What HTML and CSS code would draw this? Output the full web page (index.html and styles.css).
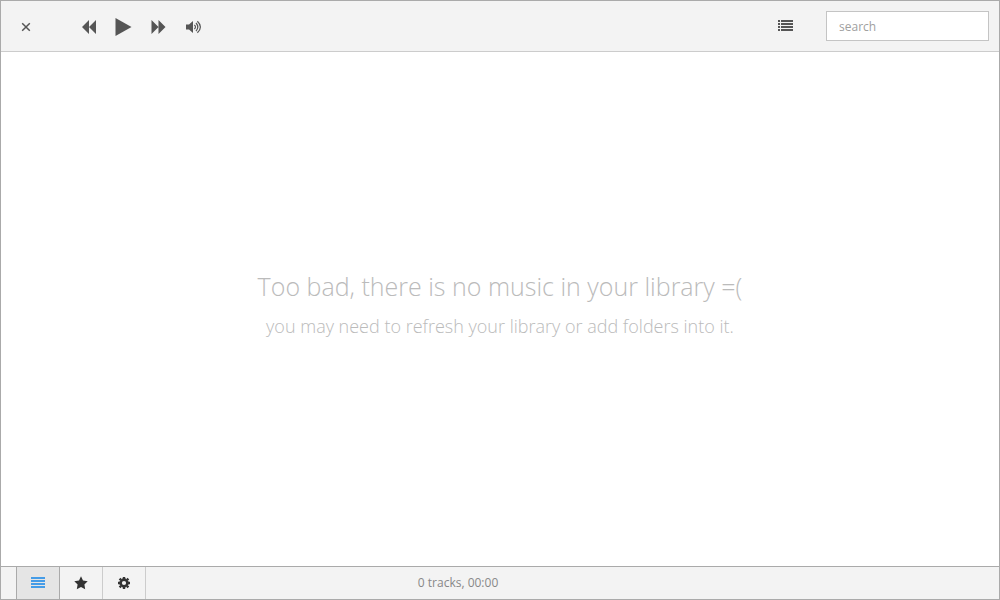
FILE: index.html
```html
<!DOCTYPE html>
<html lang="en">
<head>
    <meta charset="utf-8">
    <title>Music Library</title>
    <link rel="stylesheet" href="styles.css">
</head>
<body>
    <div class="app">
        <header class="header">
            <button type="button" class="icon-button close" aria-label="Close">
                <svg width="10" height="10" viewBox="0 0 10 10"><path d="M1.2 1.2L8.8 8.8M8.8 1.2L1.2 8.8" stroke="currentColor" stroke-width="1.5" fill="none"/></svg>
            </button>
            <div class="player-controls">
                <button type="button" class="icon-button" aria-label="Previous">
                    <svg width="14" height="14" viewBox="0 0 14 14"><path d="M7 0V14L0 7ZM14 0V14L7 7Z"/></svg>
                </button>
                <button type="button" class="icon-button" aria-label="Play">
                    <svg width="16" height="18" viewBox="0 0 16 18"><path d="M-.5 0L15.5 9L-.5 18Z" overflow="visible"/></svg>
                </button>
                <button type="button" class="icon-button" aria-label="Next">
                    <svg width="14" height="14" viewBox="0 0 14 14"><path d="M-.5 0L6.5 7L-.5 14ZM6.5 0L13.5 7L6.5 14Z"/></svg>
                </button>
                <button type="button" class="icon-button" aria-label="Volume">
                    <svg width="16" height="14" viewBox="0 0 16 14">
                        <path d="M0 4.5H3L7 1V13L3 9.5H0Z"/>
                        <path d="M8.4 4.8Q10.6 7 8.4 9.2M10 3Q13.6 7 10 11M11.4 1.2Q17.4 7 11.4 12.8" stroke="currentColor" stroke-width="1.2" fill="none"/>
                    </svg>
                </button>
            </div>
            <button type="button" class="icon-button queue" aria-label="Queue">
                <svg width="15" height="11" viewBox="0 0 15 11"><path d="M0 0H2V2H0ZM3 0H15V2H3ZM0 3H2V5H0ZM3 3H15V5H3ZM0 6H2V8H0ZM3 6H15V8H3ZM0 9H2V11H0ZM3 9H15V11H3Z"/></svg>
            </button>
            <input type="text" class="search" placeholder="search" aria-label="search">
        </header>

        <main class="main">
            <h1 class="title">Too bad, there is no music in your library =(</h1>
            <p class="hint">you may need to refresh your library or add folders into it.</p>
        </main>

        <footer class="footer">
            <nav class="nav">
                <a href="#library" class="nav-link active" aria-label="Library">
                    <svg width="14" height="12" viewBox="0 0 14 12"><path d="M0 0H14V2H0ZM0 3H14V5H0ZM0 6H14V8H0ZM0 9H14V11H0Z"/></svg>
                </a>
                <a href="#playlists" class="nav-link" aria-label="Playlists">
                    <svg width="14" height="14" viewBox="0 0 14 14"><path d="M7 .3L9 4.6L13.7 5.2L10.4 8.5L11.2 13.3L7 11.1L2.8 13.3L3.6 8.5L.3 5.2L5 4.6Z"/></svg>
                </a>
                <a href="#settings" class="nav-link" aria-label="Settings">
                    <svg width="12" height="12" viewBox="0 0 12 12">
                        <circle cx="6" cy="6" r="3.4" stroke="currentColor" stroke-width="2.6" fill="none"/>
                        <path d="M6 0V2M6 10V12M0 6H2M10 6H12M1.6 1.6L3 3M9 9L10.4 10.4M10.4 1.6L9 3M3 9L1.6 10.4" stroke="currentColor" stroke-width="2.4"/>
                    </svg>
                </a>
            </nav>
            <div class="status">0 tracks, 00:00</div>
        </footer>
    </div>
</body>
</html>
```
FILE: styles.css
```css
* { box-sizing: border-box; }
body { margin: 0; font-family: "Open Sans", sans-serif; font-size: 12px; color: #333; }
svg { display: block; fill: currentColor; overflow: visible; }
.app { display: flex; flex-direction: column; height: 100vh; border: 1px solid #aaa; background: #fff; }

.header { display: flex; align-items: center; padding: 10px; background: #f3f3f3; border-bottom: 1px solid #ccc; }
.icon-button { padding: 0; border: none; background: none; color: #555; cursor: pointer; }
.close { margin-left: 10px; padding-top: 2px; }
.player-controls { display: flex; align-items: center; gap: 20px; margin-left: 51px; padding-top: 2px; }
.queue { margin-left: auto; margin-right: 33px; padding-bottom: 2px; }
.search { width: 163px; height: 30px; padding: 0 12px; border: 1px solid #c4c4c4; background: #fff; font: inherit; }
.search::placeholder { color: #a0a0a0; }

.main { flex: 1; display: flex; flex-direction: column; align-items: center; justify-content: center; padding-bottom: 12px; text-align: center; color: #bbb; }
.title { margin: 0 0 9px; font-size: 25px; line-height: 36px; font-weight: 300; }
.hint { margin: 0; font-size: 18px; line-height: 26px; font-weight: 300; }

.footer { display: flex; align-items: center; height: 33px; background: #f3f3f3; border-top: 1px solid #aaa; }
.nav { display: flex; align-self: stretch; width: 41.6667%; padding-left: 15px; }
.nav-link { display: flex; align-items: center; justify-content: center; width: 43px; border-right: 1px solid #ccc; color: #333; }
.nav-link.active { width: 44px; border-left: 1px solid #aaa; border-right-color: #aaa; background: #e5e5e5; color: #459ce7; }
.status { flex: 1; padding: 0 1px 2px; color: #888; }
```
